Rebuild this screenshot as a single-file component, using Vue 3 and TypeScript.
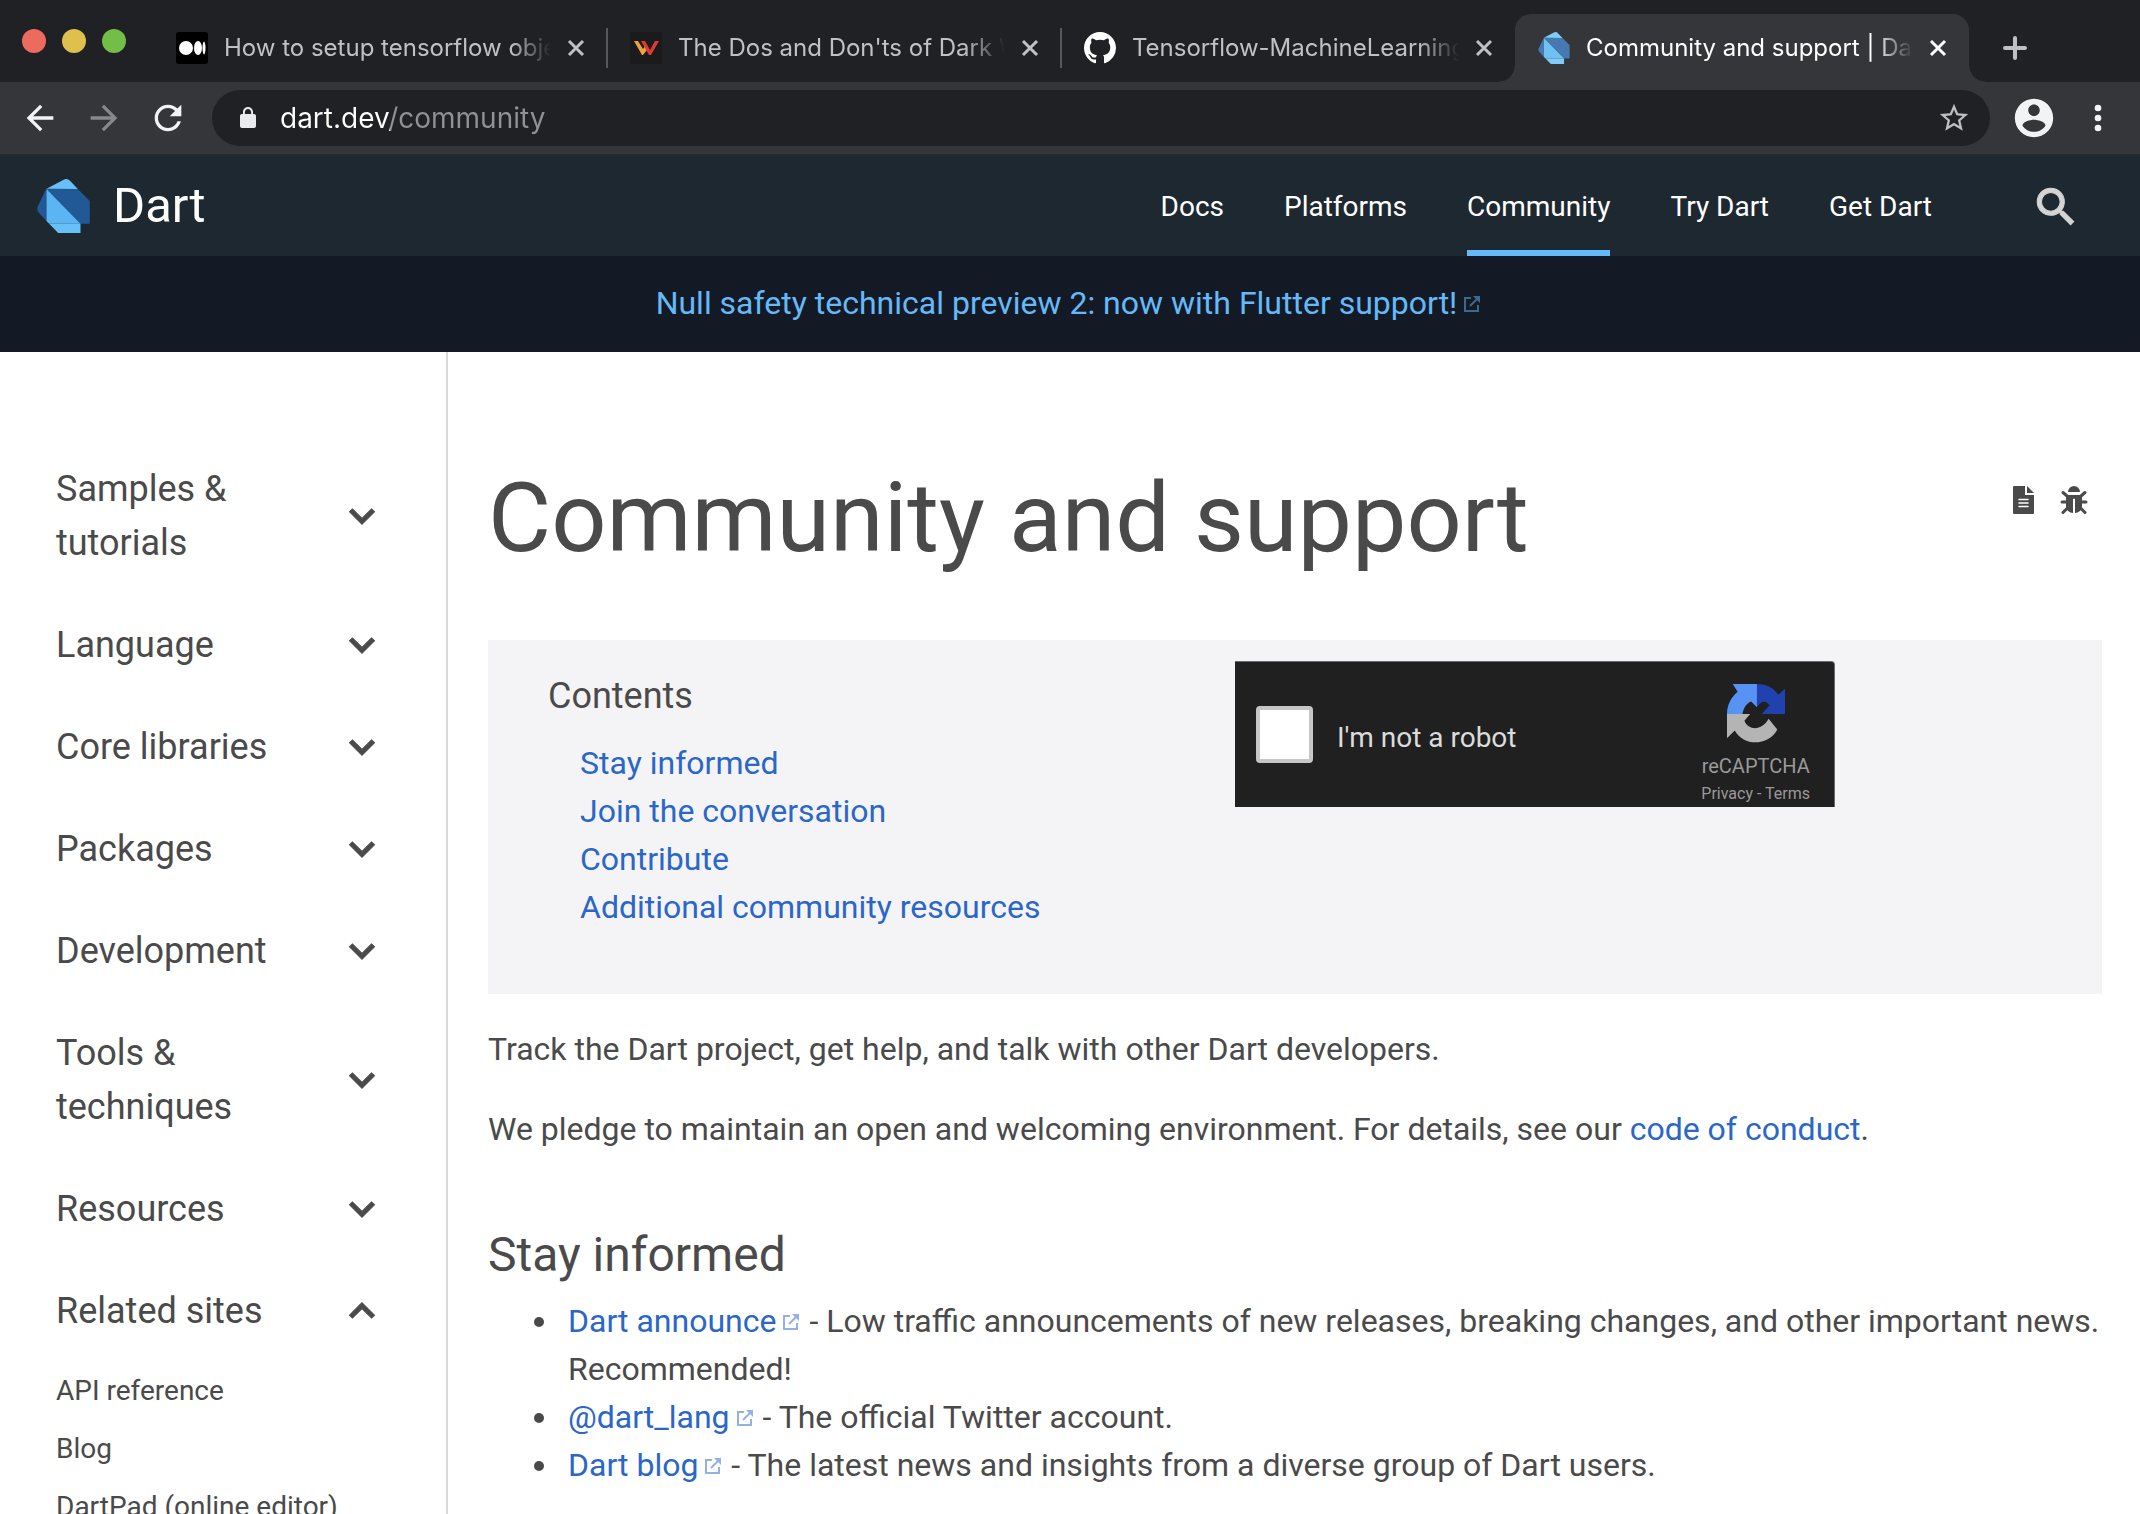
<script setup lang="ts">
import { ref } from 'vue'

interface Tab {
  id: string
  title: string
}

interface Section {
  label: string
  open?: boolean
  children?: string[]
}

const tabs: Tab[] = [
  { id: 'medium', title: 'How to setup tensorflow object' },
  { id: 'w', title: "The Dos and Don'ts of Dark Web" },
  { id: 'github', title: 'Tensorflow-MachineLearning' },
  { id: 'dart', title: 'Community and support | Dart' },
]
const activeTab = 'dart'

const navLinks = ['Docs', 'Platforms', 'Community', 'Try Dart', 'Get Dart']

const sections = ref<Section[]>([
  { label: 'Samples & tutorials' },
  { label: 'Language' },
  { label: 'Core libraries' },
  { label: 'Packages' },
  { label: 'Development' },
  { label: 'Tools & techniques' },
  { label: 'Resources' },
  {
    label: 'Related sites',
    open: true,
    children: ['API reference', 'Blog', 'DartPad (online editor)'],
  },
])

const toc = ['Stay informed', 'Join the conversation', 'Contribute', 'Additional community resources']

const channels = [
  {
    name: 'Dart announce',
    text: 'Low traffic announcements of new releases, breaking changes, and other important news. Recommended!',
  },
  { name: '@dart_lang', text: 'The official Twitter account.' },
  { name: 'Dart blog', text: 'The latest news and insights from a diverse group of Dart users.' },
]

const address = ref('dart.dev/community')
const robot = ref(false)
</script>

<template>
  <div class="window">
    <svg class="defs" aria-hidden="true">
      <symbol id="dart-mark" viewBox="0 0 158 162">
        <path fill="var(--deep)" d="M28 28V126L5 101Q-3 92 2 82Z" />
        <path fill="var(--top)" d="M28 29L78 3Q90 -4 100 7L122 30Z" />
        <path fill="var(--deep)" d="M28 30H122L158 66V134H130Z" />
        <path fill="var(--mid)" d="M28 30V126L36 134H130Z" />
        <path fill="var(--top)" d="M36 134H130V162H63Z" />
      </symbol>
      <symbol id="external" viewBox="0 0 16 16">
        <path d="M7 2H1V15H14V9" fill="none" stroke="currentColor" stroke-width="2" />
        <path d="M6 10L13 3" fill="none" stroke="currentColor" stroke-width="2" />
        <path d="M9 0H16V7Z" fill="currentColor" />
      </symbol>
    </svg>

    <div class="tabstrip">
      <div class="lights"><i class="red"></i><i class="yellow"></i><i class="green"></i></div>
      <div v-for="tab in tabs" :key="tab.id" class="tab" :class="{ active: tab.id === activeTab, before: tab.id === 'github' }">
        <svg v-if="tab.id === 'medium'" class="favicon" viewBox="0 0 32 32">
          <rect width="32" height="32" rx="3" fill="#000" />
          <circle cx="10" cy="16" r="7" fill="#fff" />
          <ellipse cx="22" cy="16" rx="4" ry="7" fill="#fff" />
          <ellipse cx="28" cy="16" rx="1.5" ry="6.5" fill="#fff" />
        </svg>
        <svg v-else-if="tab.id === 'w'" class="favicon" viewBox="0 0 32 32">
          <rect width="32" height="32" fill="#1b1b1b" />
          <path d="M4 9H8L13 17L15 14L17 18L13 23H12Z" fill="#eda33c" />
          <path d="M11 9H15L20 18L25 9H29L21 23H19Z" fill="#dd3a35" />
        </svg>
        <svg v-else-if="tab.id === 'github'" class="favicon" viewBox="0 0 16 16">
          <path fill="#fff" d="M8 0C3.58 0 0 3.58 0 8c0 3.54 2.29 6.53 5.47 7.59.4.07.55-.17.55-.38 0-.19-.01-.82-.01-1.49-2.01.37-2.53-.49-2.69-.94-.09-.23-.48-.94-.82-1.13-.28-.15-.68-.52-.01-.53.63-.01 1.08.58 1.23.82.72 1.21 1.87.87 2.33.66.07-.52.28-.87.51-1.07-1.78-.2-3.64-.89-3.64-3.95 0-.87.31-1.59.82-2.15-.08-.2-.36-1.02.08-2.12 0 0 .67-.21 2.2.82.64-.18 1.32-.27 2-.27.68 0 1.36.09 2 .27 1.53-1.04 2.2-.82 2.2-.82.44 1.1.16 1.92.08 2.12.51.56.82 1.27.82 2.15 0 3.07-1.87 3.75-3.65 3.95.29.25.54.73.54 1.48 0 1.07-.01 1.93-.01 2.2 0 .21.15.46.55.38A8.013 8.013 0 0016 8c0-4.42-3.58-8-8-8z" />
        </svg>
        <svg v-else class="favicon soft"><use href="#dart-mark" /></svg>
        <button class="tab-title">{{ tab.title }}</button>
        <button class="tab-close" aria-label="Close tab">
          <svg viewBox="0 0 24 24"><path d="M5 5L19 19M19 5L5 19" /></svg>
        </button>
      </div>
      <button class="new-tab" aria-label="New tab">
        <svg viewBox="0 0 24 24"><path d="M12 2V22M2 12H22" /></svg>
      </button>
    </div>

    <div class="toolbar">
      <button aria-label="Back">
        <svg viewBox="0 0 24 24"><path d="M20 11H7.83l5.59-5.59L12 4l-8 8 8 8 1.41-1.41L7.83 13H20v-2z" /></svg>
      </button>
      <button class="dim" aria-label="Forward">
        <svg viewBox="0 0 24 24"><path d="M12 4l-1.41 1.41L16.17 11H4v2h12.17l-5.58 5.59L12 20l8-8z" /></svg>
      </button>
      <button aria-label="Reload">
        <svg viewBox="0 0 24 24"><path d="M17.65 6.35C16.2 4.9 14.21 4 12 4c-4.42 0-7.99 3.58-7.99 8s3.57 8 7.99 8c3.73 0 6.84-2.55 7.73-6h-2.08c-.82 2.33-3.04 4-5.65 4-3.31 0-6-2.69-6-6s2.69-6 6-6c1.66 0 3.14.69 4.22 1.78L13 11h7V4l-2.35 2.35z" /></svg>
      </button>
      <div class="omnibox">
        <svg class="lock" viewBox="0 0 24 24"><path d="M18 8h-1V6c0-2.760-2.240-5-5-5S7 3.240 7 6v2H6c-1.100 0-2 .9-2 2v10c0 1.100.9 2 2 2h12c1.100 0 2-.9 2-2V10c0-1.100-.9-2-2-2zM8.900 8V6c0-1.710 1.390-3.100 3.100-3.100s3.100 1.390 3.100 3.100v2z" /></svg>
        <input v-model="address" class="address" type="text" aria-label="Address" spellcheck="false" />
        <button class="star" aria-label="Bookmark this page">
          <svg viewBox="0 0 24 24"><path d="M22 9.24l-7.19-.62L12 2 9.190 8.630 2 9.240l5.460 4.730L5.820 21 12 17.270 18.180 21l-1.630-7.030L22 9.240zM12 15.400l-3.760 2.270 1-4.280-3.320-2.880 4.380-.38L12 6.100l1.710 4.040 4.380.38-3.320 2.880 1 4.280L12 15.400z" /></svg>
        </button>
      </div>
      <button class="avatar" aria-label="Profile">
        <svg viewBox="0 0 24 24"><path d="M12 2C6.480 2 2 6.480 2 12s4.480 10 10 10 10-4.480 10-10S17.520 2 12 2zm0 3c1.660 0 3 1.340 3 3s-1.340 3-3 3-3-1.340-3-3 1.340-3 3-3zm0 14.200c-2.500 0-4.710-1.280-6-3.220.03-1.990 4-3.080 6-3.080 1.990 0 5.970 1.090 6 3.080-1.290 1.940-3.500 3.220-6 3.220z" /></svg>
      </button>
      <button class="menu" aria-label="Menu">
        <svg viewBox="0 0 24 24"><circle cx="12" cy="6" r="2" /><circle cx="12" cy="12" r="2" /><circle cx="12" cy="18" r="2" /></svg>
      </button>
    </div>

    <header class="site-header">
      <a class="brand" href="#">
        <svg class="brand-mark"><use href="#dart-mark" /></svg>
        <span>Dart</span>
      </a>
      <nav class="nav">
        <a v-for="link in navLinks" :key="link" href="#" :class="{ current: link === 'Community' }">{{ link }}</a>
      </nav>
      <button class="search" aria-label="Search">
        <svg viewBox="0 0 24 24"><path d="M15.500 14h-.79l-.28-.27C15.410 12.590 16 11.110 16 9.500 16 5.910 13.090 3 9.500 3S3 5.910 3 9.500 5.910 16 9.500 16c1.610 0 3.090-.59 4.230-1.570l.27.28v.79l5 4.990L20.490 19l-4.990-5zm-6 0C7.010 14 5 11.990 5 9.500S7.010 5 9.500 5 14 7.010 14 9.500 11.990 14 9.500 14z" /></svg>
      </button>
    </header>

    <div class="banner">
      <a href="#">Null safety technical preview 2: now with Flutter support!<svg class="ext"><use href="#external" /></svg></a>
    </div>

    <div class="body">
      <aside class="sidebar">
        <div v-for="section in sections" :key="section.label">
          <button class="section" :aria-expanded="!!section.open" @click="section.open = !section.open">
            <span>{{ section.label }}</span>
            <svg viewBox="0 0 24 24">
              <path v-if="section.open" d="M12 8l-6 6 1.410 1.410L12 10.830l4.590 4.580L18 14z" />
              <path v-else d="M16.590 8.590L12 13.170 7.410 8.590 6 10l6 6 6-6z" />
            </svg>
          </button>
          <ul v-if="section.open && section.children" class="children">
            <li v-for="child in section.children" :key="child"><a href="#">{{ child }}</a></li>
          </ul>
        </div>
      </aside>

      <main class="content">
        <div class="title-row">
          <h1>Community and support</h1>
          <div class="page-tools">
            <a href="#" aria-label="View source">
              <svg width="21" height="28" viewBox="0 0 21 28">
                <path d="M1 0H12V9H21V27Q21 28 20 28H1Q0 28 0 27V1Q0 0 1 0Z" />
                <path d="M14 0L21 7H14Z" />
                <path d="M6 13.500H15M6 17H15M6 20.500H15" stroke="#fff" stroke-width="1.500" stroke-linecap="round" />
              </svg>
            </a>
            <a href="#" aria-label="Report an issue">
              <svg width="28" height="28" viewBox="0 0 28 28">
                <path d="M8 6A6 6 0 0 1 20 6Z" />
                <path d="M6 9H22V20Q22 26 15 27V13Q14 12 13 13V27Q6 26 6 20Z" />
                <path d="M3 6.500L7 10M25 6.500L21 10M2 16H7M26 16H21M3 26.500L8 21.500M25 26.500L20 21.500" fill="none" stroke="#4a4a4a" stroke-width="3" stroke-linecap="round" />
              </svg>
            </a>
          </div>
        </div>

        <section class="contents">
          <div class="toc">
            <h3>Contents</h3>
            <ul>
              <li v-for="item in toc" :key="item"><a href="#">{{ item }}</a></li>
            </ul>
          </div>
          <div class="captcha">
            <label class="robot">
              <input v-model="robot" type="checkbox" />
              <span>I'm not a robot</span>
            </label>
            <div class="captcha-brand">
              <svg width="60" height="61" viewBox="0 0 60 61">
                <path fill="#5793f5" d="M6 0H31V24L25 18C20 20 17 25 16 31H0C0 22 4 14 11 8Z" />
                <path fill="#2142ae" d="M31 0C41 0 48 4 53 11L60 5V31H36L44 22C40 17 36 17 31 24Z" />
                <path fill="#b4b4b4" d="M0 31H24L18 38C22 48 36 49 43 36L52 47C44 63 18 66 8 48L0 56Z" />
              </svg>
              <span class="captcha-name">reCAPTCHA</span>
              <span class="captcha-legal"><a href="#">Privacy</a> - <a href="#">Terms</a></span>
            </div>
          </div>
        </section>

        <p>Track the Dart project, get help, and talk with other Dart developers.</p>
        <p>We pledge to maintain an open and welcoming environment. For details, see our <a href="#">code of conduct</a>.</p>

        <h2>Stay informed</h2>
        <ul class="channels">
          <li v-for="channel in channels" :key="channel.name">
            <a href="#">{{ channel.name }}<svg class="ext"><use href="#external" /></svg></a> - {{ channel.text }}
          </li>
        </ul>
      </main>
    </div>
  </div>
</template>

<style>
body {
  margin: 0;
  background: #fff;
}
</style>

<style scoped>
.window {
  display: flex;
  flex-direction: column;
  height: 100vh;
  overflow: hidden;
  color: #4a4a4a;
  font-family: Roboto, "Liberation Sans", sans-serif;
  font-size: 32px;
  line-height: 48px;
}

.defs {
  position: absolute;
  width: 0;
  height: 0;
}

button {
  display: flex;
  align-items: center;
  justify-content: center;
  padding: 0;
  border: 0;
  background: none;
  color: inherit;
  font: inherit;
}

a {
  color: #2b66c9;
  text-decoration: none;
}

ul {
  margin: 0;
  padding: 0;
  list-style: none;
}

/* Tab strip */
.tabstrip {
  display: flex;
  align-items: flex-end;
  flex: none;
  height: 82px;
  background: #202124;
  font-family: Inter, Roboto, sans-serif;
  font-size: 24px;
  line-height: 32px;
}

.lights {
  display: flex;
  align-items: center;
  flex: none;
  gap: 16px;
  box-sizing: border-box;
  width: 153px;
  height: 82px;
  padding-left: 22px;
}

.lights i {
  width: 24px;
  height: 24px;
  border-radius: 50%;
}

.red { background: #ed6a5e; }
.yellow { background: #e0c04c; }
.green { background: #72be47; }

.tab {
  position: relative;
  display: flex;
  align-items: center;
  flex: 0 1 454px;
  box-sizing: border-box;
  min-width: 0;
  height: 68px;
  padding: 0 19px 0 23px;
  color: #bfc1c5;
}

.tab:not(.active):not(.before)::after,
.tab.before::after {
  content: "";
  position: absolute;
  right: -1px;
  width: 2px;
  height: 40px;
  background: #55575b;
}

.tab.before::after {
  display: none;
}

.tab.active {
  border-radius: 16px 16px 0 0;
  background: #35363a;
  color: #fff;
}

.tab.active::before,
.tab.active::after {
  content: "";
  position: absolute;
  bottom: 0;
  width: 16px;
  height: 16px;
}

.tab.active::before {
  right: 100%;
  background: radial-gradient(circle at 0 0, transparent 15px, #35363a 16px);
}

.tab.active::after {
  left: 100%;
  background: radial-gradient(circle at 100% 0, transparent 15px, #35363a 16px);
}

.favicon {
  flex: none;
  width: 32px;
  height: 32px;
  margin-right: 16px;
}

.favicon.soft {
  --deep: #4579b0;
  --mid: #70c0f4;
  --top: #80cbf8;
}

.tab-title {
  flex: 1;
  justify-content: flex-start;
  min-width: 0;
  overflow: hidden;
  white-space: nowrap;
  mask-image: linear-gradient(to right, #000 calc(100% - 40px), transparent);
}

.tab-close {
  flex: none;
  width: 24px;
  height: 24px;
  margin-left: 13px;
}

.tab-close svg,
.new-tab svg {
  width: 24px;
  height: 24px;
  fill: none;
  stroke: currentColor;
  stroke-width: 3;
}

.new-tab svg {
  stroke-width: 4;
  stroke-linecap: round;
}

.new-tab {
  width: 60px;
  height: 68px;
  margin-left: 16px;
  color: #bdc1c6;
}

/* Toolbar */
.toolbar {
  display: flex;
  align-items: center;
  flex: none;
  gap: 24px;
  box-sizing: border-box;
  height: 74px;
  padding: 0 22px 0 20px;
  border-bottom: 2px solid #28292b;
  background: #35363a;
  color: #f1f3f4;
}

.toolbar svg {
  width: 40px;
  height: 40px;
  fill: currentColor;
}

.toolbar .dim {
  color: #86888b;
}

.omnibox {
  display: flex;
  align-items: center;
  flex: 1;
  box-sizing: border-box;
  height: 56px;
  padding: 0 19px 0 24px;
  border-radius: 28px;
  background: #202124;
}

.omnibox .lock {
  width: 24px;
  height: 24px;
  margin-right: 20px;
  color: #e8eaed;
}

.address {
  flex: 1;
  min-width: 0;
  padding: 0;
  border: 0;
  outline: 0;
  background: linear-gradient(to right, #fff 110px, #8f9194 110px);
  background-clip: text;
  color: transparent;
  font-family: Inter, Roboto, sans-serif;
  font-size: 28px;
  line-height: 40px;
}

.omnibox .star svg {
  width: 34px;
  height: 34px;
  color: #bdbfc2;
}

.toolbar .avatar {
  margin: 0 -3px;
}

.toolbar .avatar svg {
  width: 46px;
  height: 46px;
}

/* Site header */
.site-header {
  display: flex;
  align-items: center;
  flex: none;
  box-sizing: border-box;
  height: 100px;
  padding: 0 59px 0 37px;
  background: #1e2831;
}

.brand {
  display: flex;
  align-items: center;
  gap: 23px;
  color: #fff;
  font-size: 49px;
}

.brand-mark {
  --deep: #215896;
  --mid: #5ab5f2;
  --top: #67c0fa;
  width: 53px;
  height: 54px;
}

.nav {
  display: flex;
  gap: 60px;
  height: 100%;
  margin-left: auto;
  margin-right: 99px;
}

.nav a {
  box-sizing: border-box;
  height: 100%;
  padding-top: 6px;
  border-bottom: 6px solid transparent;
  color: #fff;
  font-size: 28px;
  line-height: 90px;
}

.nav .current {
  border-color: #64b9f8;
}

.search svg {
  display: block;
  width: 50px;
  height: 50px;
  padding-top: 2px;
  fill: #d4d4d4;
  stroke: #d4d4d4;
  stroke-width: 0.5;
}

/* Banner */
.banner {
  display: flex;
  align-items: center;
  justify-content: center;
  flex: none;
  box-sizing: border-box;
  height: 96px;
  padding: 0 2px 2px 0;
  background: #141a25;
}

.banner a {
  color: #64b9f8;
}

.ext {
  width: 16px;
  height: 16px;
  margin: 0 2px 2px 7px;
  opacity: 0.5;
}

/* Page body */
.body {
  display: flex;
  flex: 1;
  min-height: 0;
}

.sidebar {
  flex: none;
  box-sizing: border-box;
  width: 448px;
  padding: 86px 59px 0 56px;
  border-right: 2px solid #dadada;
}

.section {
  justify-content: space-between;
  width: 100%;
  padding: 24px 0;
  font-size: 36px;
  line-height: 54px;
  text-align: left;
}

.section svg {
  flex: none;
  width: 50px;
  height: 50px;
  fill: #4a4a4a;
  stroke: #4a4a4a;
  stroke-width: 0.5;
}

.children {
  padding-top: 8px;
  font-size: 28px;
  line-height: 42px;
}

.children li {
  margin-bottom: 16px;
}

.children a {
  color: #4a4a4a;
}

.content {
  flex: 1;
  min-width: 0;
  padding: 106px 38px 0 40px;
}

.title-row {
  display: flex;
  justify-content: space-between;
  margin-bottom: 62px;
}

h1,
h2,
h3 {
  margin: 0;
  font-weight: 400;
}

h1 {
  font-size: 97px;
  line-height: 120px;
}

h2 {
  margin: 72px 0 12px;
  font-size: 48px;
  line-height: 60px;
}

h3 {
  margin-bottom: 17px;
  font-size: 36px;
  line-height: 52px;
}

.page-tools {
  display: flex;
  gap: 26px;
  padding: 28px 14px 0 0;
}

.page-tools svg {
  display: block;
  fill: #4a4a4a;
}

.contents {
  display: flex;
  align-items: flex-start;
  margin-bottom: 31px;
  background: #f4f4f7;
}

.toc {
  flex: 1;
  padding: 30px 0 63px 60px;
}

.toc ul {
  padding-left: 32px;
}

.captcha {
  display: flex;
  justify-content: space-between;
  flex: none;
  box-sizing: border-box;
  width: 600px;
  height: 146px;
  margin: 21px 267px 0 0;
  padding: 0 24px 0 21px;
  border-top: 1px solid #6b6b6b;
  border-right: 1px solid #6b6b6b;
  border-top-right-radius: 4px;
  background: #202020;
}

.robot {
  display: flex;
  align-items: center;
  gap: 24px;
  color: #dcdcdc;
  font-size: 28px;
}

.robot span {
  padding-top: 6px;
}

.robot input {
  box-sizing: border-box;
  width: 57px;
  height: 57px;
  margin: 0;
  appearance: none;
  border: 4px solid #c6c6c6;
  border-radius: 4px;
  background: #fff;
}

.captcha-brand {
  display: flex;
  flex-direction: column;
  align-items: center;
  padding-top: 22px;
  color: #9a9a9a;
}

.captcha-name {
  margin-top: 9px;
  font-size: 20px;
  line-height: 28px;
}

.captcha-legal {
  font-size: 16px;
  line-height: 27px;
}

.captcha-legal a {
  color: inherit;
}

p {
  margin: 0 0 32px;
}

.channels {
  padding-left: 80px;
}

.channels li {
  position: relative;
}

.channels li::before {
  content: "";
  position: absolute;
  top: 20px;
  left: -34px;
  width: 10px;
  height: 10px;
  border-radius: 50%;
  background: #4a4a4a;
}
</style>
